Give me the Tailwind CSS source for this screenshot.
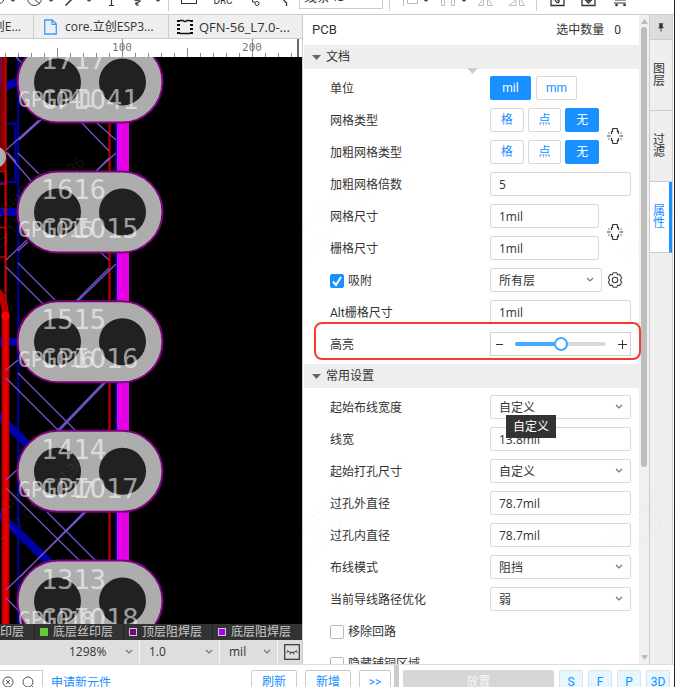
<!DOCTYPE html>
<html lang="zh-CN">
<head>
<meta charset="utf-8">
<meta name="viewport" content="width=device-width, initial-scale=1">
<title>PCB</title>
<script src="https://cdn.jsdelivr.net/npm/@tailwindcss/browser@4"></script>
</head>
<body class="flex h-screen flex-col overflow-hidden border-r border-[#1b2635] bg-white font-['Roboto','Noto_Sans_CJK_SC',sans-serif] text-[12px] leading-4 text-[#333]">

<svg class="hidden">
  <symbol id="chev" viewBox="0 0 8 6"><path d="M1 1l3 3 3-3" fill="none" stroke="#777" stroke-width="1.2"/></symbol>
  <symbol id="link" viewBox="0 0 16 16"><path d="M4.500 6V3.500h1V1.500q0-1 1-1h3q1 0 1 1v2h1V6M4.500 10v2.500h1v2q0 1 1 1h3q1 0 1-1v-2h1V10" fill="none" stroke="#333" stroke-width="1.200"/><path d="M0 8h3.500M12.500 8H16" stroke="#999" stroke-width="2"/><path d="M1 4.500l1.500 1M1 11.500l1.500-1M15 4.500l-1.500 1M15 11.500l-1.500-1" stroke="#555"/></symbol>
</svg>

<!-- Toolbar -->
<header class="flex h-[15px] shrink-0 items-end overflow-hidden border-b border-[#ccc]">
  <button aria-label="圆弧" class="w-[22px] shrink-0"><svg class="block h-[14px] w-full" viewBox="0 0 22 14"><path d="M-3 3a5 5 0 0 0 7-4" fill="none" stroke="#444"/><circle cx="13" cy="-.500" r="2" fill="#444"/></svg></button>
  <button aria-label="禁止区域" class="w-9 shrink-0"><svg class="block h-[14px] w-full" viewBox="22 0 36 14"><circle cx="34.500" cy="-1.500" r="7" fill="none" stroke="#444"/><path d="M29-5l11 9" stroke="#444"/><circle cx="51" cy="-.500" r="2" fill="#444"/></svg></button>
  <button aria-label="折线" class="w-9 shrink-0"><svg class="block h-[14px] w-full" viewBox="58 0 36 14"><path d="M65.500 5.500l7-7" stroke="#333" stroke-width="1.500"/><circle cx="89" cy="-.500" r="2" fill="#444"/></svg></button>
  <button aria-label="文本" class="w-9 shrink-0"><svg class="block h-[14px] w-full" viewBox="94 0 36 14"><path d="M111.500 0v5M109 5.500h5" stroke="#333" stroke-width="1.200"/></svg></button>
  <button aria-label="飞线" class="w-9 shrink-0"><svg class="block h-[14px] w-full" viewBox="130 0 36 14"><path d="M134 0l6 1-4 3M136 5h3M136 5V2" fill="none" stroke="#333" stroke-width="1.200"/><circle cx="158" cy="-.500" r="2" fill="#444"/></svg></button>
  <span class="mb-[3px] ml-[2px] h-3 w-px shrink-0 bg-[#ccc]"></span>
  <button aria-label="矩形" class="ml-2 w-6 shrink-0"><svg class="block h-[14px] w-full" viewBox="177 0 24 14"><rect x="181.500" y="-8.500" width="15" height="12" fill="none" stroke="#333"/></svg></button>
  <button class="mb-2 ml-2 w-7 shrink-0 text-[10px] leading-[10px]">DRC</button>
  <button aria-label="过孔" class="ml-2 w-6 shrink-0"><svg class="block h-[14px] w-full" viewBox="245 0 24 14"><g fill="none" stroke="#333"><circle cx="257" cy="3.500" r="2"/><path d="M252.500-2v4h2.500"/></g></svg></button>
  <button aria-label="布线" class="ml-2 w-[18px] shrink-0"><svg class="block h-[14px] w-full" viewBox="277 0 18 14"><path d="M286.500 6V3l-3-3" fill="none" stroke="#333" stroke-width="1.300"/></svg></button>
  <select aria-label="线条" class="mb-[5px] ml-1 h-6 w-[84px] shrink-0 appearance-none border border-[#ccc] px-1 pb-[2px] font-['Open_Sans','Noto_Sans_CJK_SC',sans-serif] text-[13px]"><option>线条45</option></select>
  <span class="mb-[3px] ml-[6px] h-3 w-px shrink-0 bg-[#ccc]"></span>
  <button aria-label="左对齐" class="ml-3 w-8 shrink-0"><svg class="block h-[14px] w-full" viewBox="402 0 32 14"><path d="M403.500 0v6M407.500 0v3.500h10V0" fill="none" stroke="#bbb"/><circle cx="426" cy="-.500" r="2" fill="#444"/></svg></button>
  <button aria-label="分布" class="ml-1 w-8 shrink-0"><svg class="block h-[14px] w-full" viewBox="438 0 32 14"><path d="M441.500 0v5.500h3V0M451.500 0v5.500h3V0" fill="none" stroke="#bbb"/><circle cx="464" cy="-.500" r="2" fill="#444"/></svg></button>
  <button aria-label="水平翻转" class="ml-1 w-6 shrink-0"><svg class="block h-[14px] w-full" viewBox="474 0 24 14"><path d="M483.500-2v7.500h-5zM487.500-2v7.500h5z" fill="none" stroke="#bbb"/></svg></button>
  <button aria-label="垂直翻转" class="ml-2 w-6 shrink-0"><svg class="block h-[14px] w-full" viewBox="506 0 24 14"><path d="M509 5.500h7V0zM524.500 5.500l-5-8v8z" fill="none" stroke="#bbb"/></svg></button>
  <span class="mb-[3px] ml-[6px] h-3 w-px shrink-0 bg-[#ccc]"></span>
  <button aria-label="生成" class="ml-2 w-6 shrink-0"><svg class="block h-[14px] w-full" viewBox="545 0 24 14"><path d="M551 0v5.500h13V0M555 0q2 4 4 2V0h-2" fill="none" stroke="#333" stroke-width="1.300"/></svg></button>
  <button aria-label="预览" class="ml-2 w-6 shrink-0"><svg class="block h-[14px] w-full" viewBox="577 0 24 14"><path d="M582 0v5.500h13V0M584.500-1l4 4 4-4" fill="none" stroke="#333" stroke-width="1.300"/><circle cx="588.500" cy="0" r="1.500" fill="#333"/></svg></button>
  <button aria-label="购物车" class="ml-2 w-6 shrink-0"><svg class="block h-[14px] w-full" viewBox="609 0 24 14"><path d="M615 0h11M614 3h12" stroke="#333" stroke-width="1.200"/><circle cx="616.500" cy="5" r="1.300" fill="#333"/><circle cx="624.500" cy="5" r="1.300" fill="#333"/></svg></button>
</header>

<main class="flex min-h-0 flex-1 overflow-hidden">
  <!-- Editor -->
  <section class="flex min-w-0 flex-1 flex-col">
    <nav class="flex h-6 shrink-0 border-b border-[#ccc] bg-[#efefef] font-['Open_Sans','Noto_Sans_CJK_SC',sans-serif] text-[12px]">
      <a href="#" class="flex w-[34px] shrink-0 items-center justify-end overflow-hidden whitespace-nowrap border-r border-[#ccc] pr-3">立创E...</a>
      <a href="#" class="flex w-[135px] shrink-0 items-center gap-2 whitespace-nowrap border-r border-[#ccc] pl-[10px]">
        <svg class="h-4 w-[13px] shrink-0" viewBox="0 0 13 16"><path d="M.7 1h7.600l4 4v10H.7zM8 1v4.300h4" fill="none" stroke="#3d9bff" stroke-width="1.300"/></svg>
        <span>core.立创ESP3...</span></a>
      <a href="#" class="flex min-w-0 flex-1 items-center gap-[6px] whitespace-nowrap pl-2">
        <svg class="h-4 w-4 shrink-0" viewBox="0 0 16 16"><path d="M3 1.500h3q2 2 4 0h3M3 14.500h10" fill="none" stroke="#111" stroke-width="1.300"/><path d="M1.500 1v14M14.500 1v14" stroke="#111" stroke-width="3" stroke-dasharray="2 2"/></svg>
        <span class="text-[13px]">QFN-56_L7.0-...</span></a>
    </nav>
    <svg class="block h-[18px] w-full shrink-0" viewBox="0 39 302 18" preserveAspectRatio="xMinYMin slice">
      <path d="M5.500 53v4M18.500 53v4M31.500 53v4M44.500 53v4M57.500 48v9M70.500 53v4M83.500 53v4M96.500 53v4M109.500 53v4M122.500 39v18M135.500 53v4M148.500 53v4M161.500 53v4M174.500 53v4M187.500 48v9M200.500 53v4M213.500 53v4M226.500 53v4M239.500 53v4M252.500 39v18M265.500 53v4M278.500 53v4M291.500 53v4" stroke="#888"/>
      <path d="M298 39v18" stroke="#666" stroke-width="2"/>
      <g font-family="DejaVu Sans Mono, monospace" font-size="11" fill="#777" text-anchor="middle"><text x="122" y="51">100</text><text x="252" y="51">200</text></g>
    </svg>
    <svg class="block min-h-0 w-full flex-1 bg-black" viewBox="0 57 302 567" preserveAspectRatio="xMinYMin slice">
      <defs>
        <g id="pad"><rect x="17.500" y="-40.500" width="145" height="81" rx="40.500" fill="#adadad" stroke="#800080" stroke-width="2"/><circle cx="57.500" r="23.500" fill="#212121"/><circle cx="122.500" r="23.500" fill="#212121"/></g>
      </defs>
      <!-- bottom copper -->
      <g fill="none" stroke="#0000ab">
        <path d="M18.300 57v567" stroke-width="2"/>
        <path d="M0 123.500h15.500V182H0" stroke-width="2"/>
        <path d="M-2 92Q8 84 20 81M0 212h20M0 341.700h20M-3 414l34 34M-3 512l58 56" stroke-width="8"/>
      </g>
      <!-- top copper -->
      <path d="M0 57h5v114H0z" fill="#800000"/>
      <path d="M0 57h2v22q0 6-2 7z" fill="#80004d"/>
      <g fill="none" stroke="#b80000">
        <path d="M5.500 57v258" stroke-width="2.500"/>
        <path d="M0 171.500h6v12.500H0M0 227.500h6V257H0" stroke="#d00000" stroke-width="1.500"/>
        <path d="M-3 290Q5.500 300 5.500 316" stroke-width="7"/>
        <path d="M5.500 315v309" stroke-width="8"/>
        <path d="M5.500 315v309" stroke="#e80000" stroke-width="4"/>
        <path d="M109.500 57v567" stroke="#a80000" stroke-width="2.500"/>
      </g>
      <circle cx="5.500" cy="315.500" r="4" fill="#f00"/>
      <circle cx="-5" cy="157" r="8" fill="none" stroke="#adadad" stroke-width="6"/>
      <path d="M116.500 57v567" stroke="#0000d0" stroke-width="2"/>
      <path d="M117 57h12v567h-12z" fill="#e600e6"/>
      <!-- ratlines -->
      <path fill="none" stroke="#7353c8" stroke-width="1.300" d="M16 57l8 8M39 120L6 150M41 120L19 140M80 121l29 30M97 123l19 17M18 153l21 21M6 152l26 30M8 153l8 9M116 153l-22 20M109 158l-14 14M27 240L6 260M28 242l-10 9M99 251l10 9M18 263l37 37M6 267l37 37M116 264l-39 38M109 268l-34 34M18 360L6 370M18 373l58 58M6 378l54 54M107 381l-49 51M105 381l-49 51M18 469L6 480M47 512l49 49M6 488l75 74M88 510L6 590M86 510L20 577M6 598l14 14"/>
      <use href="#pad" y="82"/><use href="#pad" y="212"/><use href="#pad" y="341.700"/><use href="#pad" y="471.300"/><use href="#pad" y="601"/>
      <g font-family="DejaVu Sans Mono, monospace" font-size="27" fill="#fff" fill-opacity=".58">
        <text x="41" y="69">1717</text><text x="41" y="109">GPIO41</text><text x="18" y="107" font-size="21">GPIO41</text>
        <text x="41" y="199">1616</text><text x="41" y="238">GPIO15</text><text x="18" y="237" font-size="21">GPIO15</text>
        <text x="41" y="329">1515</text><text x="41" y="368">GPIO16</text><text x="18" y="367" font-size="21">GPIO16</text>
        <text x="41" y="459">1414</text><text x="41" y="498">GPIO17</text><text x="18" y="497" font-size="21">GPIO17</text>
        <text x="41" y="589">1313</text><text x="41" y="628">GPIO18</text><text x="18" y="627" font-size="21">GPIO18</text>
      </g>
      <g font-family="Open Sans, sans-serif" font-size="15" fill="#888" fill-opacity=".16">
        <g transform="translate(-28 247) rotate(-45)"><text>ZouYuXuan</text><text x="-2" y="21">2025-12-01 11:27:36</text></g>
        <g transform="translate(-28 547) rotate(-45)"><text>ZouYuXuan</text><text x="-2" y="21">2025-12-01 11:27:36</text></g>
      </g>
    </svg>
    <div class="flex h-4 shrink-0 justify-end overflow-hidden bg-[#333] text-[12px] text-[#ccc]">
      <button class="flex w-[89px] shrink-0 items-center gap-[5px] whitespace-nowrap pl-[6px]"><span class="size-2 border border-[#ccc] bg-yellow-300"></span>顶层丝印层</button>
      <button class="flex w-[89px] shrink-0 items-center gap-[5px] whitespace-nowrap border-l border-[#222] pl-[5px]"><span class="size-2 bg-[#66cc33]"></span>底层丝印层</button>
      <button class="flex w-[89px] shrink-0 items-center gap-[5px] whitespace-nowrap border-l border-[#222] pl-[5px]"><span class="size-2 border border-[#ccc] bg-[#800080]"></span>顶层阻焊层</button>
      <button class="flex w-[90px] shrink-0 items-center gap-[5px] whitespace-nowrap border-l border-[#222] pl-[5px]"><span class="size-2 border border-[#ccc] bg-[#a0f]"></span>底层阻焊层</button>
    </div>
    <div class="flex h-6 shrink-0 bg-[#dedede] font-['Open_Sans','Noto_Sans_CJK_SC',sans-serif] text-[12px]">
      <div class="relative flex-1 border-r border-[#f4f4f4]"><select aria-label="缩放" class="h-full w-full appearance-none pl-[69px]"><option>1298%</option></select><svg class="pointer-events-none absolute right-[6px] top-[9px] h-[6px] w-2"><use href="#chev"/></svg></div>
      <div class="relative w-20 border-r border-[#f4f4f4]"><select aria-label="网格" class="h-full w-full appearance-none pl-[9px]"><option>1.0</option></select><svg class="pointer-events-none absolute right-[6px] top-[9px] h-[6px] w-2"><use href="#chev"/></svg></div>
      <div class="relative w-[58px] border-r border-[#f4f4f4]"><select aria-label="单位选择" class="h-full w-full appearance-none pl-[9px]"><option>mil</option></select><svg class="pointer-events-none absolute right-[6px] top-[9px] h-[6px] w-2"><use href="#chev"/></svg></div>
      <button aria-label="隐藏" class="flex w-6 items-center justify-center pl-1"><svg class="size-4" viewBox="0 0 16 16"><rect x=".7" y=".7" width="14.600" height="14.600" fill="none" stroke="#333" stroke-width="1.200"/><path d="M3 6.500q5 4 10 0M4 7.500L2.500 9M6.500 8.500L6 10.500M9.500 8.500l.5 2M12 7.500L13.500 9" fill="none" stroke="#333"/></svg></button>
    </div>
  </section>

  <!-- Properties -->
  <aside class="relative flex w-[347px] shrink-0 border-l border-[#ccc] pl-px">
    <div class="min-w-0 flex-1">
      <div class="flex h-[30px] items-center justify-between pl-2 pr-[18px]"><h1 class="text-[13px]">PCB</h1><p class="flex gap-[10px]"><span>选中数量</span><span>0</span></p></div>
      <h2 class="relative flex h-6 items-center gap-[5px] bg-[#eee] pl-2"><svg class="h-[5px] w-[9px]" viewBox="0 0 9 5"><path d="M0 0h9L4.500 5z" fill="#666"/></svg>文档<svg class="absolute left-[163px] top-[23px] h-[6px] w-[11px]" viewBox="0 0 11 6"><path d="M0 0h11L5.500 6z" fill="#ccc"/></svg></h2>

      <div class="pb-1 pl-[26px] pr-2 pt-[3px]">
        <div class="flex h-8 items-center"><span class="w-40 shrink-0 pt-[2px]">单位</span>
          <div class="flex gap-[5px]"><button class="h-6 w-[41px] rounded-[2px] bg-[#1890ff] text-white">mil</button><button class="h-6 w-[41px] rounded-[2px] border border-[#d9d9d9] text-[#1890ff]">mm</button></div></div>

        <div class="flex items-center gap-2"><div>
          <div class="flex h-8 items-center"><span class="w-40 shrink-0 pt-[2px]">网格类型</span>
            <div class="flex w-[109px] gap-1 text-[#1890ff]"><button class="h-6 flex-1 rounded-[2px] border border-[#d9d9d9]">格</button><button class="h-6 flex-1 rounded-[2px] border border-[#d9d9d9]">点</button><button class="h-6 flex-1 rounded-[2px] border border-[#1890ff] bg-[#1890ff] text-white">无</button></div></div>
          <div class="flex h-8 items-center"><span class="w-40 shrink-0 pt-[2px]">加粗网格类型</span>
            <div class="flex w-[109px] gap-1 text-[#1890ff]"><button class="h-6 flex-1 rounded-[2px] border border-[#d9d9d9]">格</button><button class="h-6 flex-1 rounded-[2px] border border-[#d9d9d9]">点</button><button class="h-6 flex-1 rounded-[2px] border border-[#1890ff] bg-[#1890ff] text-white">无</button></div></div>
          </div><button aria-label="关联网格类型"><svg class="block size-4"><use href="#link"/></svg></button></div>

        <div class="flex h-8 items-center"><label for="mult" class="w-40 shrink-0 pt-[2px]">加粗网格倍数</label><input id="mult" value="5" class="h-6 min-w-0 flex-1 rounded-[2px] border border-[#d9d9d9] px-2 font-['Open_Sans',sans-serif]"></div>

        <div class="flex items-center gap-2"><div>
          <div class="flex h-8 items-center"><label for="gs" class="w-40 shrink-0 pt-[2px]">网格尺寸</label><input id="gs" value="1mil" class="h-6 w-[109px] rounded-[2px] border border-[#d9d9d9] px-2 font-['Open_Sans',sans-serif]"></div>
          <div class="flex h-8 items-center"><label for="ss" class="w-40 shrink-0 pt-[2px]">栅格尺寸</label><input id="ss" value="1mil" class="h-6 w-[109px] rounded-[2px] border border-[#d9d9d9] px-2 font-['Open_Sans',sans-serif]"></div>
          </div><button aria-label="关联尺寸"><svg class="block size-4"><use href="#link"/></svg></button></div>

        <div class="flex h-8 items-center">
          <label class="relative flex w-40 shrink-0 items-center gap-1 pt-[2px]"><input type="checkbox" checked class="size-[14px] appearance-none rounded-[2px] border border-[#bbb] checked:border-[#1890ff] checked:bg-[#1890ff]"><svg class="pointer-events-none absolute left-0 size-[14px]" viewBox="0 0 14 14"><path d="M3 7.500l3 3.500 5-8" fill="none" stroke="#fff" stroke-width="2"/></svg>吸附</label>
          <div class="relative w-[112px]"><select aria-label="吸附层" class="block h-6 w-full appearance-none rounded-[2px] border border-[#d9d9d9] px-2 pt-px"><option>所有层</option></select><svg class="pointer-events-none absolute right-2 top-[9px] h-[6px] w-2"><use href="#chev"/></svg></div>
          <button aria-label="吸附设置" class="ml-[5px]"><svg class="block size-4" viewBox="0 0 16 16"><path d="M6.200.8h3.600l.8 2 2.200-.2 1.900 3.100L13.400 8l1.300 2.300-1.900 3.100-2.200-.2-.8 2H6.200l-.8-2-2.200.2-1.900-3.100L2.600 8 1.300 5.700l1.900-3.100 2.200.2z" fill="none" stroke="#444" stroke-width="1.100" stroke-linejoin="round"/><circle cx="8" cy="8" r="2.700" fill="none" stroke="#444" stroke-width="1.100"/></svg></button>
        </div>

        <div class="flex h-8 items-center"><label for="alt" class="w-40 shrink-0 pt-[2px]">Alt栅格尺寸</label><input id="alt" value="1mil" class="h-6 min-w-0 flex-1 rounded-[2px] border border-[#d9d9d9] px-2 font-['Open_Sans',sans-serif]"></div>

        <div class="relative flex h-8 items-center"><label for="hl" class="w-40 shrink-0 pt-[2px]">高亮</label>
          <div class="flex h-6 min-w-0 flex-1 items-center justify-between border border-[#d0d0d0] pl-[5px] pr-[3px]">
            <button aria-label="减小"><svg class="block h-[9px] w-[7px]" viewBox="0 0 7 9"><path d="M0 4.500h7" stroke="#333"/></svg></button>
            <input id="hl" type="range" min="0" max="100" value="50" class="h-1 w-[91px] appearance-none rounded-full bg-linear-to-r from-[#40a9ff] from-50% to-[#d9d9d9] to-50% [&::-webkit-slider-thumb]:size-[14px] [&::-webkit-slider-thumb]:appearance-none [&::-webkit-slider-thumb]:rounded-full [&::-webkit-slider-thumb]:border-2 [&::-webkit-slider-thumb]:border-solid [&::-webkit-slider-thumb]:border-[#40a9ff] [&::-webkit-slider-thumb]:bg-white">
            <button aria-label="增大"><svg class="block size-[9px]" viewBox="0 0 9 9"><path d="M0 4.500h9M4.500 0v9" stroke="#333"/></svg></button>
          </div>
          <div class="pointer-events-none absolute -left-4 -right-[10px] -top-[6px] bottom-0 z-10 rounded-[8px] border-2 border-[#f8392c]"></div>
        </div>
      </div>

      <h2 class="flex h-6 items-center gap-[5px] bg-[#eee] pl-2"><svg class="h-[5px] w-[9px]" viewBox="0 0 9 5"><path d="M0 0h9L4.500 5z" fill="#666"/></svg>常用设置</h2>
      <div class="pl-[26px] pr-2 pt-[3px]">
        <div class="flex h-8 items-center"><label for="a1" class="w-40 shrink-0 pt-[2px]">起始布线宽度</label><div class="relative flex-1"><select id="a1" class="block h-6 w-full appearance-none rounded-[2px] border border-[#d9d9d9] px-2 pt-px"><option>自定义</option></select><svg class="pointer-events-none absolute right-2 top-[9px] h-[6px] w-2"><use href="#chev"/></svg>
          <div role="tooltip" class="absolute left-4 top-5 z-10 flex h-[23px] w-[50px] items-center justify-center bg-[#333] text-white">自定义</div></div></div>
        <div class="flex h-8 items-center"><label for="a2" class="w-40 shrink-0 pt-[2px]">线宽</label><input id="a2" value="13.8mil" class="h-6 min-w-0 flex-1 rounded-[2px] border border-[#d9d9d9] px-2 font-['Open_Sans',sans-serif]"></div>
        <div class="flex h-8 items-center"><label for="a3" class="w-40 shrink-0 pt-[2px]">起始打孔尺寸</label><div class="relative flex-1"><select id="a3" class="block h-6 w-full appearance-none rounded-[2px] border border-[#d9d9d9] px-2 pt-px"><option>自定义</option></select><svg class="pointer-events-none absolute right-2 top-[9px] h-[6px] w-2"><use href="#chev"/></svg></div></div>
        <div class="flex h-8 items-center"><label for="a4" class="w-40 shrink-0 pt-[2px]">过孔外直径</label><input id="a4" value="78.7mil" class="h-6 min-w-0 flex-1 rounded-[2px] border border-[#d9d9d9] px-2 font-['Open_Sans',sans-serif]"></div>
        <div class="flex h-8 items-center"><label for="a5" class="w-40 shrink-0 pt-[2px]">过孔内直径</label><input id="a5" value="78.7mil" class="h-6 min-w-0 flex-1 rounded-[2px] border border-[#d9d9d9] px-2 font-['Open_Sans',sans-serif]"></div>
        <div class="flex h-8 items-center"><label for="a6" class="w-40 shrink-0 pt-[2px]">布线模式</label><div class="relative flex-1"><select id="a6" class="block h-6 w-full appearance-none rounded-[2px] border border-[#d9d9d9] px-2 pt-px"><option>阻挡</option></select><svg class="pointer-events-none absolute right-2 top-[9px] h-[6px] w-2"><use href="#chev"/></svg></div></div>
        <div class="flex h-8 items-center"><label for="a7" class="w-40 shrink-0 pt-[2px]">当前导线路径优化</label><div class="relative flex-1"><select id="a7" class="block h-6 w-full appearance-none rounded-[2px] border border-[#d9d9d9] px-2 pt-px"><option>弱</option></select><svg class="pointer-events-none absolute right-2 top-[9px] h-[6px] w-2"><use href="#chev"/></svg></div></div>
        <label class="flex h-8 items-center gap-1 pt-[2px]"><input type="checkbox" class="size-[14px] appearance-none rounded-[2px] border border-[#bbb] checked:bg-[#1890ff]">移除回路</label>
        <label class="flex h-8 items-center gap-1 pt-[2px]"><input type="checkbox" class="size-[14px] appearance-none rounded-[2px] border border-[#bbb] checked:bg-[#1890ff]">隐藏铺铜区域</label>
      </div>
    </div>
    <div class="flex w-[10px] shrink-0 flex-col items-center justify-between bg-[#f0f0f0] py-1">
      <svg class="h-[5px] w-[7px] shrink-0" viewBox="0 0 7 5"><path d="M0 5h7L3.500 0z" fill="#bbb"/></svg>
      <div class="mt-[3px] min-h-0 flex-1"><div class="h-[70%] w-[6px] rounded-full bg-[#bdbdbd]"></div></div>
      <svg class="h-[5px] w-[7px] shrink-0" viewBox="0 0 7 5"><path d="M0 0h7L3.500 5z" fill="#bbb"/></svg>
    </div>
    <svg class="pointer-events-none absolute left-0 top-0 h-[649px] w-[371px]" viewBox="303 15 371 649" font-family="Open Sans, sans-serif" font-size="15" fill="#888" fill-opacity=".05">
      <g transform="translate(292 247) rotate(-45)"><text>ZouYuXuan</text><text x="-2" y="21">2025-12-01 11:27:36</text></g>
      <g transform="translate(292 547) rotate(-45)"><text>ZouYuXuan</text><text x="-2" y="21">2025-12-01 11:27:36</text></g>
      <g transform="translate(612 247) rotate(-45)"><text>ZouYuXuan</text><text x="-2" y="21">2025-12-01 11:27:36</text></g>
      <g transform="translate(612 547) rotate(-45)"><text>ZouYuXuan</text><text x="-2" y="21">2025-12-01 11:27:36</text></g>
    </svg>
  </aside>

  <!-- Side tabs -->
  <nav class="mr-px flex w-6 shrink-0 flex-col border-x border-[#ccc] bg-[#efefef] text-center leading-3">
    <button aria-label="固定" class="flex h-[25px] items-center justify-center border-b border-[#ccc] bg-[#ddd]"><svg class="h-[9px] w-[6px]" viewBox="0 0 7 10"><path d="M1 0h5v1H5.500v3L7 6H0l1.500-2V1H1zM3 6h1v4H3z" fill="#333"/></svg></button>
    <button class="flex h-[71px] items-center border-b border-[#ccc] pl-[3px]"><span class="w-3">图层</span></button>
    <button class="flex h-[71px] items-center border-b border-[#ccc] pl-[3px]"><span class="w-3">过滤</span></button>
    <button class="flex h-[71px] items-center border-b border-r-3 border-b-[#ccc] border-r-[#1890ff] bg-white pl-[3px] text-[#1890ff]"><span class="w-3">属性</span></button>
  </nav>
</main>

<!-- Bottom panel -->
<footer class="flex h-[23px] shrink-0 items-start overflow-hidden border-t border-[#ddd] text-[#1890ff]">
  <div class="mt-[5px] flex h-6 w-[43px] shrink-0 items-center gap-2 border border-l-0 border-[#ccc] pl-[2px]">
    <button aria-label="清除"><svg class="block size-3" viewBox="0 0 12 12"><circle cx="6" cy="6" r="5" fill="none" stroke="#555"/><path d="M4 4l4 4M8 4L4 8" stroke="#555"/></svg></button>
    <button aria-label="搜索"><svg class="block size-3" viewBox="0 0 12 12"><circle cx="6" cy="6" r="5" fill="none" stroke="#555"/><path d="M9 9l3 3" stroke="#555"/></svg></button>
  </div>
  <a href="#" class="ml-2 mt-[10px]">申请新元件</a>
  <div class="min-w-0 flex-1"></div>
  <div class="flex shrink-0 gap-2 pt-[5px]"><button class="h-6 w-[46px] rounded-[2px] border border-[#ccc]">刷新</button><button class="h-6 w-[46px] rounded-[2px] border border-[#ccc]">新增</button><button class="h-6 w-8 rounded-[2px] border border-[#ccc]">&gt;&gt;</button></div>
  <div class="ml-[3px] h-full w-[5px] shrink-0 bg-[#ccc]"></div>
  <div class="flex shrink-0 gap-[5px] pl-1 pr-1 pt-[5px]"><button class="h-6 w-[151px] rounded-[2px] bg-[#d6d6d6] text-[#f7f7f7]">放置</button><button class="h-6 w-6 rounded-[2px] border border-[#d9e4ea] bg-[#e6f7ff]">S</button><button class="h-6 w-6 rounded-[2px] border border-[#d9e4ea] bg-[#e6f7ff]">F</button><button class="h-6 w-6 rounded-[2px] border border-[#d9e4ea] bg-[#e6f7ff]">P</button><button class="h-6 w-6 rounded-[2px] border border-[#d9e4ea] bg-[#e6f7ff]">3D</button></div>
</footer>
</body>
</html>
